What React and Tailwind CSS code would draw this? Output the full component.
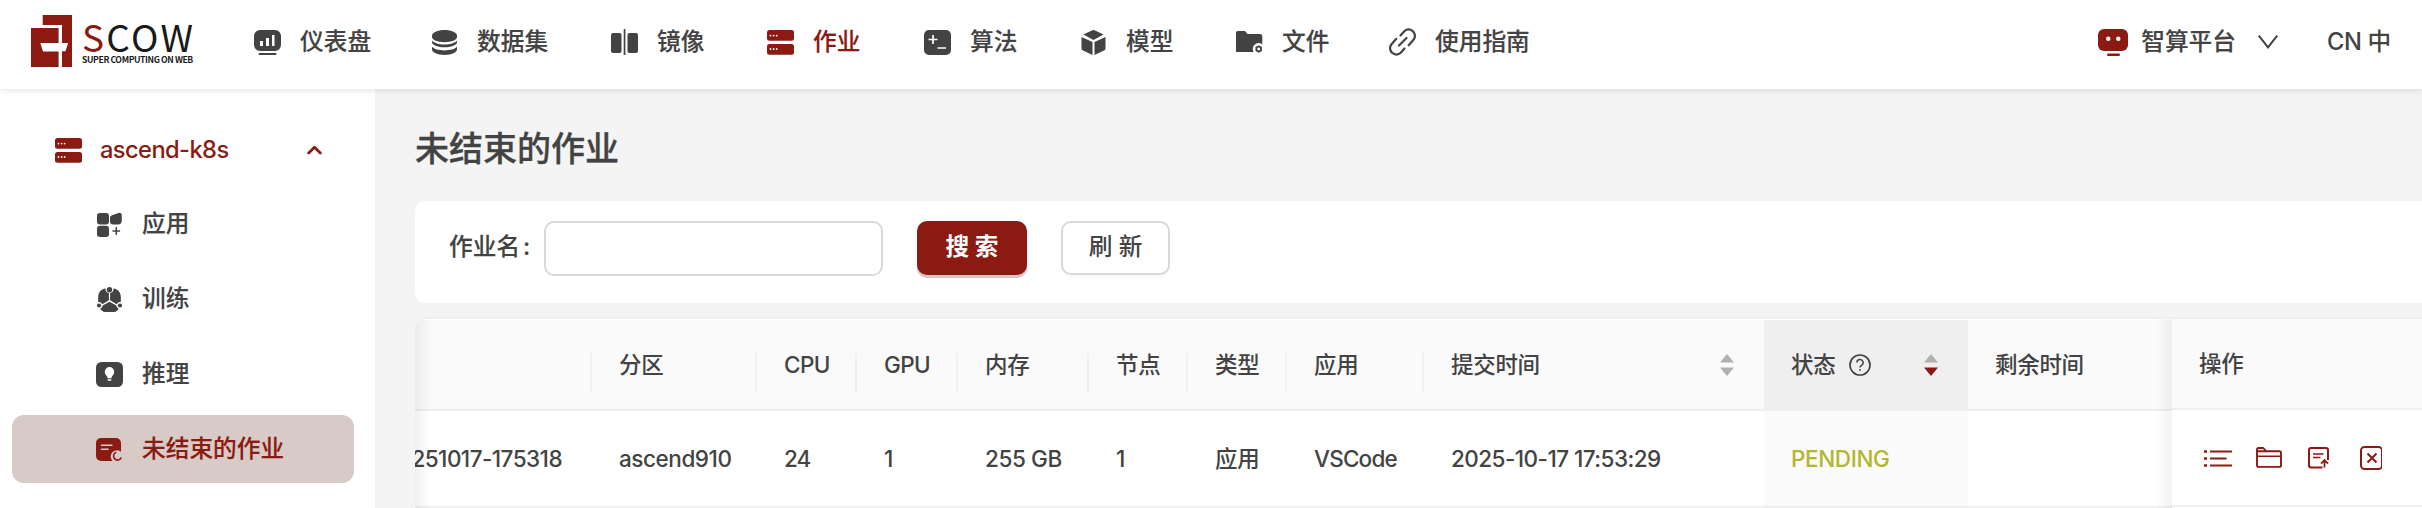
import React from "react";

const Icon = ({ w, h, className = "", children }) => (
  <svg width={w} height={h} viewBox={`0 0 ${w} ${h}`} className={`block shrink-0 ${className}`} fill="currentColor">
    {children}
  </svg>
);

const Logo = () => (
  <div className="flex text-[#1a1a1a]">
    <svg width="41" height="52" viewBox="0 0 41 52" className="block shrink-0" fill="#8b1a12">
      <path d="M11.700 0H41v52H31V36.300h3.500l2.600-8.400H31V10H11.700z" />
      <path d="M0 13h27.600v15H9.300l2.700 8.400h15.600V52H0z" />
    </svg>
    <div className="ml-[10px] flex w-[120px] flex-col whitespace-nowrap font-['Noto_Sans_CJK_SC',sans-serif]">
      <div className="h-[38px] text-[37px] leading-[42px] font-normal tracking-[2.3px]">
        <span className="text-[#8b1a12]">S</span>COW
      </div>
      <div className="h-[14px] text-[8.700px] leading-[14px] font-bold tracking-[-0.420px]">SUPER COMPUTING ON WEB</div>
    </div>
  </div>
);

const DashboardIcon = () => (
  <Icon w={27} h={25}>
    <path fillRule="evenodd" d="M6 0h15a6 6 0 0 1 6 6v9a6 6 0 0 1-6 6H6a6 6 0 0 1-6-6V6a6 6 0 0 1 6-6zM6 11v5h3v-5zm6-3v8h3V8zm6-3v11h2.500V5z" />
    <rect x="4.500" y="23" width="18" height="2" rx="1" />
  </Icon>
);
const DatabaseIcon = () => (
  <Icon w={27} h={25}>
    <path d="M1 5.500C1 2.500 6.500 0 13.500 0S26 2.500 26 5.500v1.500c0 3-5.500 5.200-12.500 5.200S1 10 1 7z" />
    <path d="M1 10.500c2 2.500 7 4 12.500 4s10.500-1.500 12.500-4v2.200c-1 2.600-6 4.600-12.500 4.600S2 15.300 1 12.700z" />
    <path d="M1 16.800c2 2.300 7 3.600 12.500 3.600S24 19.100 26 16.800v2.800c0 3-5.500 5.400-12.500 5.400S1 22.600 1 19.600z" />
  </Icon>
);
const MirrorIcon = () => (
  <Icon w={27} h={27}>
    <rect x="0" y="4" width="10.500" height="20" rx="2" />
    <rect x="16.500" y="4" width="10.500" height="20" rx="2" />
    <rect x="12.700" y="0" width="1.700" height="26" />
  </Icon>
);
const ServerIcon = () => (
  <Icon w={27} h={25}>
    <rect width="27" height="10.700" rx="2.500" />
    <rect y="14" width="27" height="10.700" rx="2.500" />
    <g fill="#fff">
      {[3.5, 6.7, 9.7].map((x) => (
        <React.Fragment key={x}>
          <circle cx={x} cy="5.600" r="0.900" />
          <circle cx={x} cy="19" r="0.900" />
        </React.Fragment>
      ))}
    </g>
  </Icon>
);
const AlgorithmIcon = () => (
  <Icon w={27} h={25}>
    <rect width="27" height="25" rx="5" />
    <path d="M4.500 9.500h9M9 5v9M13.500 18h8.500" stroke="#fff" strokeWidth="1.700" fill="none" />
  </Icon>
);
const CubeIcon = () => (
  <Icon w={27} h={25}>
    <path d="M12.300.300a3 3 0 0 1 2.400 0l8.800 4.200L13.500 10 3.500 4.500z" />
    <path d="M1.500 7l11 5v13L3 20.500a2.500 2.500 0 0 1-1.500-2.300zM25.500 7l-11 5v13l9.500-4.500a2.500 2.500 0 0 0 1.500-2.300z" />
  </Icon>
);
const FolderIcon = () => (
  <Icon w={27} h={23}>
    <path d="M1.500 0H9l2.500 3H24a2.300 2.300 0 0 1 2.300 2.300V21H0V1.500A1.500 1.500 0 0 1 1.500 0z" />
    <circle cx="22.700" cy="18" r="6" fill="#fff" />
    <path d="M22.700 14.300l3.200 1.800v3.800l-3.200 1.800-3.200-1.800v-3.800z" />
    <circle cx="22.700" cy="18" r="1.400" fill="#fff" />
  </Icon>
);
const LinkIcon = () => (
  <Icon w={27} h={28}>
    <g fill="none" stroke="currentColor" strokeWidth="2.200" strokeLinecap="round">
      <path d="M11.500 7.500l3.800-4.300a6 6 0 0 1 8.500 0 6 6 0 0 1 .7 8.500l-4.800 5.500" />
      <path d="M15.500 20.500l-3.800 4.300a6 6 0 0 1-8.500 0 6 6 0 0 1-.7-8.500l4.800-5.500" />
      <path d="M10 17.500l7.500-7.500" />
    </g>
  </Icon>
);
const RobotIcon = () => (
  <Icon w={30} h={27} className="text-[#8b1a12]">
    <rect width="30" height="22" rx="6" />
    <rect x="9" y="24.500" width="13" height="2.500" rx="1.250" />
    <circle cx="10.300" cy="9.700" r="2.200" fill="#fff" />
    <circle cx="20.300" cy="9.700" r="2.200" fill="#fff" />
  </Icon>
);
const AppsIcon = () => (
  <Icon w={27} h={25}>
    <rect x="1" y="1" width="12" height="11.500" rx="3" />
    <rect x="1" y="13.700" width="12" height="11.300" rx="3" />
    <path d="M14 6c0-1.300.8-2.200 2-2.700L22.500 1c1.800-.6 3.300.4 3.300 2.200v5.300a4 4 0 0 1-4 4H17a3 3 0 0 1-3-3z" />
    <path d="M20.300 15v8M16.500 19h7.600" stroke="currentColor" strokeWidth="1.500" />
  </Icon>
);
const TrainIcon = () => (
  <Icon w={27} h={25}>
    <path d="M9.500 1.500a4.300 4.300 0 0 0 3.400 4.500v7.300L6.300 17.200A4 4 0 0 0 2.200 15V10C2.200 5.500 5 2 9.500 1.500zM17.500 1.500a4.300 4.300 0 0 1-3.400 4.500v7.300l6.600 3.900A4 4 0 0 1 24.800 15V10C24.800 5.500 22 2 17.500 1.500z" />
    <circle cx="13.500" cy="2.700" r="2.700" />
    <circle cx="3" cy="18.500" r="2.100" />
    <circle cx="24" cy="18.500" r="2.100" />
    <path d="M13.500 14.700l6.800 3.800c.3 1.500 1.200 2.500 2.400 3-1 2-2.700 3.500-4.700 3.500H9c-2 0-3.700-1.500-4.700-3.500 1.200-.5 2.100-1.500 2.400-3z" />
  </Icon>
);
const BulbIcon = () => (
  <Icon w={27} h={25}>
    <rect width="27" height="25" rx="5.500" />
    <path fill="#fff" d="M13.500 5a4.700 4.700 0 0 1 4.700 4.700c0 2-1 3.200-2 4.300-.5.600-.7 1.400-.7 2.200h-4c0-.8-.2-1.600-.7-2.200-1-1.100-2-2.300-2-4.300A4.700 4.700 0 0 1 13.500 5zM11.700 17.300h3.600v1.500h-3.600z" />
  </Icon>
);
const JobIcon = () => (
  <Icon w={27} h={25}>
    <rect y="1" width="25" height="23" rx="5" />
    <path d="M5.500 8.300H16M5.500 12.300h6.500" stroke="#d8cac7" strokeWidth="1.500" strokeLinecap="round" />
    <circle cx="21" cy="19.500" r="6.300" fill="#d8cac7" />
    <path d="M20.300 15.300a4 4 0 1 0 5 5.200" fill="none" stroke="currentColor" strokeWidth="1.600" />
  </Icon>
);

const NAV = [
  { label: "仪表盘", icon: <DashboardIcon />, width: "w-[177px]" },
  { label: "数据集", icon: <DatabaseIcon />, width: "w-[180px]" },
  { label: "镜像", icon: <MirrorIcon />, width: "w-[156px]" },
  { label: "作业", icon: <ServerIcon />, width: "w-[157px]", active: true },
  { label: "算法", icon: <AlgorithmIcon />, width: "w-[156px]" },
  { label: "模型", icon: <CubeIcon />, width: "w-[156px]" },
  { label: "文件", icon: <FolderIcon />, width: "w-[153px]" },
  { label: "使用指南", icon: <LinkIcon />, width: "w-[160px]" },
];

const SIDE = [
  { label: "应用", icon: <AppsIcon /> },
  { label: "训练", icon: <TrainIcon /> },
  { label: "推理", icon: <BulbIcon /> },
  { label: "未结束的作业", icon: <JobIcon />, active: true },
];

const Sorter = ({ down = "#b0b0b0" }) => (
  <svg width="14" height="22" viewBox="0 0 14 22" className="block">
    <path d="M7 0l7 8.500H0z" fill="#b0b0b0" />
    <path d="M7 22l7-8.500H0z" fill={down} />
  </svg>
);
const Help = () => (
  <svg width="22" height="22" viewBox="0 0 22 22" className="ml-[14px] block" fill="none" stroke="#434343">
    <circle cx="11" cy="11" r="10" strokeWidth="1.700" />
    <path d="M7.900 8.600a3.100 3.100 0 1 1 4.600 2.700c-1 .6-1.500 1-1.500 2.200" strokeWidth="1.500" />
    <circle cx="11" cy="16" r="0.700" fill="#434343" strokeWidth="0.600" />
  </svg>
);

const COLS = [
  { w: "w-[177px]", head: "", cell: "251017-175318", ls: "tracking-[-0.550px]", clip: true },
  { w: "w-[165px]", head: "分区", cell: "ascend910", ls: "tracking-[-0.450px]" },
  { w: "w-[100px]", head: "CPU", cell: "24", ls: "tracking-[-0.9px]" },
  { w: "w-[101px]", head: "GPU", cell: "1", ls: "tracking-[-0.9px]" },
  { w: "w-[131px]", head: "内存", cell: "255 GB", ls: "tracking-[-0.4px]" },
  { w: "w-[99px]", head: "节点", cell: "1", ls: "" },
  { w: "w-[99px]", head: "类型", cell: "应用", ls: "tracking-[-0.3px]" },
  { w: "w-[137px]", head: "应用", cell: "VSCode", ls: "tracking-[-0.8px]" },
  { w: "w-[340px]", head: "提交时间", cell: "2025-10-17 17:53:29", ls: "tracking-[-0.550px]", sort: true },
  { w: "w-[204px]", head: "状态", cell: "PENDING", ls: "tracking-[-0.4px]", status: true },
  { w: "w-[204px]", head: "剩余时间", cell: "", ls: "" },
];

const HeadCell = ({ c, i }) => (
  <div className={`relative flex h-full shrink-0 items-center ${c.w} pl-[27px] ${c.status ? "bg-[#efefef]" : ""}`}>
    <span className={c.head === "CPU" || c.head === "GPU" ? "tracking-[-0.6px]" : "tracking-[-0.3px]"}>{c.head}</span>
    {c.status && <Help />}
    {(c.sort || c.status) && (
      <div className="mr-[30px] ml-auto">
        <Sorter down={c.status ? "#8b1a12" : "#b0b0b0"} />
      </div>
    )}
    {i < 8 && <i className="absolute top-[33px] right-0 h-10 w-[2px] bg-[#f0f0f0]" />}
  </div>
);

const BodyCell = ({ c }) => (
  <div
    className={`flex h-full shrink-0 items-center whitespace-nowrap ${c.w} ${
      c.clip ? "justify-end pr-[30px]" : "pl-[27px]"
    } ${c.status ? "bg-[#fafafa] text-[#b3b62f]" : ""} ${c.ls}`}
  >
    {c.cell}
  </div>
);

export default function App() {
  return (
    <div className="flex h-[508px] w-[2422px] flex-col overflow-hidden bg-[#f4f4f4] font-['Inter','Noto_Sans_CJK_SC',sans-serif] text-[22.5px] font-medium text-[#434343]">
      <header className="relative z-10 flex h-[89px] shrink-0 bg-white text-[23.700px] shadow-[0_1px_6px_rgba(0,0,0,0.12)]">
        <div className="w-[254px] shrink-0 pt-[15px] pl-[31px]">
          <Logo />
        </div>
        <nav className="flex h-[84px] items-center">
          {NAV.map((n) => (
            <div key={n.label} className={`flex shrink-0 items-center gap-[19px] ${n.width} ${n.active ? "text-[#8b1a12]" : ""}`}>
              {n.icon}
              <span className="-mt-px leading-8 whitespace-nowrap [-webkit-text-stroke:0.15px]">{n.label}</span>
            </div>
          ))}
        </nav>
        <div className="ml-auto flex h-[84px] items-center pr-[31px]">
          <RobotIcon />
          <span className="ml-[13px] leading-8 whitespace-nowrap [-webkit-text-stroke:0.15px]">智算平台</span>
          <svg width="20" height="14" viewBox="0 0 20 14" className="ml-[22px] block" fill="none" stroke="#434343" strokeWidth="2">
            <path d="M.8.700L10 12.300 19.200.700" />
          </svg>
          <span className="ml-[49px] w-[64px] leading-8 tracking-[-0.4px] whitespace-nowrap">CN 中</span>
        </div>
      </header>

      <div className="flex min-h-0 flex-1">
        <aside className="flex w-[375px] shrink-0 flex-col bg-white px-3 pt-[26px] text-[23.700px]">
          <div className="flex h-[68px] items-center pt-[2px] pl-[43px] text-[#8b1a12]">
            <ServerIcon />
            <span className="ml-[18px] tracking-[-0.6px]">ascend-k8s</span>
            <svg width="15" height="10" viewBox="0 0 15 10" className="mr-[41px] ml-auto block" fill="none" stroke="currentColor" strokeWidth="2.800" strokeLinecap="round" strokeLinejoin="round">
              <path d="M1.700 8L7.500 2.200 13.300 8" />
            </svg>
          </div>
          {SIDE.map((s) => (
            <div
              key={s.label}
              className={`mt-[7px] flex h-[68px] w-[342px] shrink-0 items-center rounded-xl pt-px pl-[84px] ${
                s.active ? "bg-[#d8cac7] text-[#8b1a12]" : ""
              }`}
            >
              {s.icon}
              <span className="-mt-[2px] ml-[19px] [-webkit-text-stroke:0.15px]">{s.label}</span>
            </div>
          ))}
        </aside>

        <main className="flex min-w-0 flex-1 flex-col pl-10">
          <h1 className="mt-[35px] h-[49px] text-[34px] leading-[49px] font-medium [-webkit-text-stroke:0.3px]">未结束的作业</h1>
          <section className="mt-7 flex h-[102px] shrink-0 items-start rounded-l-[10px] bg-white pt-5 pl-[34px] text-[23.700px]">
            <label className="flex h-[52px] w-[95px] items-center whitespace-nowrap [-webkit-text-stroke:0.15px]">
              作业名<span className="ml-[3px]">:</span>
            </label>
            <input className="h-[55px] w-[339px] rounded-[10px] border-2 border-[#d9d9d9] bg-white" />
            <button className="ml-[34px] h-[54px] w-[110px] rounded-[10px] bg-[#8b1a12] pb-[3px] font-bold text-white shadow-[0_3px_0_#dcc5c3]">搜 索</button>
            <button className="ml-[34px] h-[54px] w-[109px] rounded-[10px] border-2 border-[#d9d9d9] bg-white pb-[3px] font-medium shadow-[0_3px_0_#fafafa]">刷 新</button>
          </section>

          <section className="relative mt-[14px] flex h-[191px] shrink-0 overflow-hidden rounded-tl-[10px] border-t-2 border-[#efefef] bg-white">
            <div className="w-[1757px] shrink-0 overflow-hidden">
              <div className="flex h-[92px] border-t border-b-2 border-t-white border-b-[#efefef] bg-[#fafafa]">
                {COLS.map((c, i) => (
                  <HeadCell key={i} c={c} i={i} />
                ))}
              </div>
              <div className="flex h-[97px] border-b-2 border-[#efefef]">
                {COLS.map((c, i) => (
                  <BodyCell key={i} c={c} />
                ))}
              </div>
            </div>
            <div className="flex-1">
              <div className="flex h-[91px] items-center border-b-2 border-[#efefef] bg-[#fafafa] pl-[27px] tracking-[-0.3px]">操作</div>
              <div className="flex h-[97px] items-center border-b-2 border-[#efefef] pl-[32px] text-[#8b1a12]">
                <svg width="28" height="18" viewBox="0 0 28 18" fill="none" stroke="currentColor" strokeWidth="1.900">
                  <path d="M6 2.500h22M6 9.500h16.500M6 16.500h22" />
                  <path d="M0 2.500h3M0 9.500h3M0 16.500h3" strokeWidth="2.400" />
                </svg>
                <svg width="26" height="21" viewBox="0 0 26 21" className="ml-6" fill="none" stroke="currentColor" strokeWidth="1.900" strokeLinejoin="round">
                  <path d="M1 18V2.500C1 1.500 1.500 1 2.500 1h4.800L10 4.200h13.300c1 0 1.700.7 1.700 1.700v12.300c0 1-.7 1.700-1.700 1.700H2.700C1.700 19.900 1 19.200 1 18zM1 4.200h9" />
                  <path d="M1 9.200h24" strokeWidth="1.400" />
                </svg>
                <svg width="22" height="22" viewBox="0 0 22 22" className="ml-[26px]" fill="none" stroke="currentColor" strokeWidth="2">
                  <path d="M14.500 20.500H3A2 2 0 0 1 1 18.500V3A2 2 0 0 1 3 1h15a2 2 0 0 1 2 2v10" />
                  <path d="M5 7h10.500M5 10.500h7.500" strokeWidth="1.600" />
                  <path d="M16.500 20.500V13M13 16.700l3.500-3.600 3.500 3.600" strokeWidth="1.800" />
                </svg>
                <svg width="22" height="24" viewBox="0 0 22 24" className="ml-[30px]" fill="none" stroke="currentColor" strokeWidth="2">
                  <rect x="1" y="1" width="21" height="22" rx="3.500" />
                  <path d="M7.500 7.500l9 9M16.500 7.500l-9 9" />
                </svg>
              </div>
            </div>
            <div className="pointer-events-none absolute inset-y-0 left-0 w-4 bg-linear-to-r from-black/6 to-transparent" />
            <div className="pointer-events-none absolute inset-y-0 left-[1741px] w-4 bg-linear-to-l from-black/5 to-transparent" />
          </section>
        </main>
      </div>
    </div>
  );
}
